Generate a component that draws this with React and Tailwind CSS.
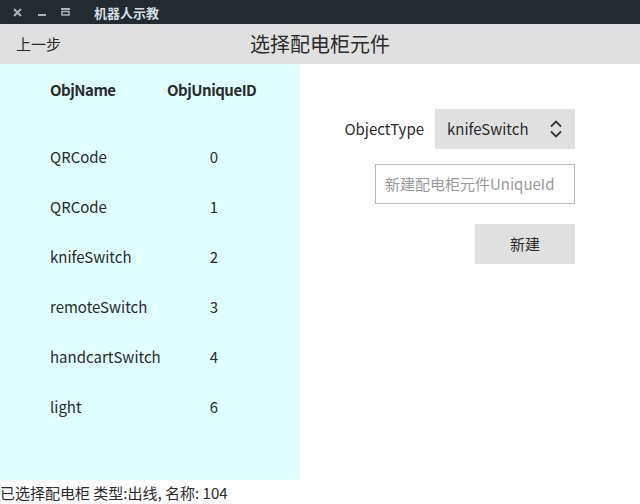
import React from "react";

const rows = [
  ["QRCode", "0"],
  ["QRCode", "1"],
  ["knifeSwitch", "2"],
  ["remoteSwitch", "3"],
  ["handcartSwitch", "4"],
  ["light", "6"],
];

export default function App() {
  return (
    <div
      className="w-[640px] h-[504px] bg-white flex flex-col text-[#2b2b2b] overflow-hidden"
      style={{ fontFamily: '"Noto Sans CJK SC", "Noto Sans", sans-serif' }}
    >
      {/* title bar */}
      <div className="h-[24px] bg-[#232a30] flex items-center text-[#c8d0d6]">
        <svg className="ml-[13px]" width="9" height="9" viewBox="0 0 9 9">
          <path d="M1 1L8 8M8 1L1 8" stroke="#aab4bb" strokeWidth="2" />
        </svg>
        <div className="ml-[16px] mt-[6px] w-[8px] h-[2px] bg-[#aab4bb]" />
        <svg className="ml-[15px]" width="9" height="8" viewBox="0 0 9 8">
          <rect x="0" y="0" width="9" height="2" fill="#aab4bb" />
          <rect x="1" y="3.5" width="7" height="3.5" fill="none" stroke="#aab4bb" strokeWidth="1.5" />
        </svg>
        <span className="ml-[24px] text-[13px] font-bold text-[#d4dde3] leading-none">机器人示教</span>
      </div>
      {/* header */}
      <div className="h-[40px] bg-[#e0e0e0] relative flex items-center">
        <span className="ml-[16px] text-[15px]">上一步</span>
        <span className="absolute left-[250px] top-[7px] text-[20px] leading-[26px]">选择配电柜元件</span>
      </div>
      <div className="flex h-[416px]">
        {/* table */}
        <div className="w-[300px] bg-[#e0ffff] flex flex-col">
          <div className="flex h-[52px] items-end text-[15px] font-bold tracking-[-0.5px]">
            <span className="ml-[50px] w-[117px] leading-[20px] mb-[16px]">ObjName</span>
            <span className="w-[89px] text-center leading-[20px] mb-[16px] whitespace-nowrap">ObjUniqueID</span>
          </div>
          <div className="flex flex-col mt-[16px]">
            {rows.map(([n, id], i) => (
              <div key={i} className="flex h-[50px] items-center text-[15px]">
                <span className="ml-[50px] w-[117px]">{n}</span>
                <span className="w-[94px] text-center">{id}</span>
              </div>
            ))}
          </div>
        </div>
        {/* form */}
        <div className="flex-1 flex flex-col items-end pr-[65px] pt-[45px]">
          <div className="flex items-center">
            <span className="text-[15px] mr-[11px]">ObjectType</span>
            <div className="w-[140px] h-[40px] bg-[#e0e0e0] flex items-center pl-[12px] relative">
              <span className="text-[15px]">knifeSwitch</span>
              <svg className="absolute left-[114px] top-[10px]" width="14" height="20" viewBox="0 0 14 20">
                <path d="M2 7.5L7 2.5L12 7.5M2 12.5L7 17.5L12 12.5" fill="none" stroke="#333" strokeWidth="1.8" />
              </svg>
            </div>
          </div>
          <div className="mt-[15px] w-[200px] h-[40px] border border-[#b9b9b9] flex items-center pl-[9px] text-[15px] text-[#9a9a9a]">
            新建配电柜元件UniqueId
          </div>
          <div className="mt-[20px] w-[100px] h-[40px] bg-[#e0e0e0] flex items-center justify-center text-[15px]">
            新建
          </div>
        </div>
      </div>
      <div className="h-[24px] flex items-center text-[15px] leading-none">
        已选择配电柜 类型:出线, 名称: 104
      </div>
    </div>
  );
}
